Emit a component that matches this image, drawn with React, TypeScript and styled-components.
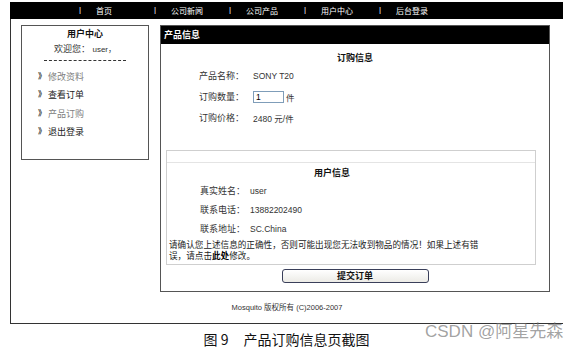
import React from 'react';
import styled, { createGlobalStyle } from 'styled-components';

const Global = createGlobalStyle`
  html, body { margin: 0; padding: 0; background: #fff; }
  body { font-family: "Liberation Sans", "Noto Sans CJK SC", sans-serif; color: #222; }
`;

const Page = styled.div`
  position: relative;
  width: 578px;
  height: 350px;
  overflow: hidden;
  padding-top: 2px;
  box-sizing: border-box;
`;

const Site = styled.div`
  margin-left: 10px;
  width: 553px;
`;

const Nav = styled.nav`
  height: 17px;
  background: #000;
  display: flex;
  align-items: center;
  padding-left: 69px;
  color: #fff;
  font-size: 8px;
`;

const NavItem = styled.div`
  width: 75px;
  display: flex;
  gap: 15px;
  white-space: nowrap;
`;

const Frame = styled.div`
  height: 305px;
  box-sizing: border-box;
  border-left: 1px solid #333;
  border-bottom: 1px solid #333;
  display: flex;
  flex-direction: column;
`;

const Columns = styled.div`
  display: flex;
  align-items: flex-start;
  gap: 11px;
  padding: 6px 0 0 10px;
`;

const Sidebar = styled.aside`
  width: 128px;
  height: 135px;
  box-sizing: border-box;
  border: 1px solid #555;
  padding-top: 2px;
  font-size: 9px;
`;

const SideTitle = styled.div`
  text-align: center;
  font-weight: bold;
  line-height: 12px;
  color: #111;
`;

const Welcome = styled.div`
  text-align: center;
  line-height: 12px;
  margin-top: 3px;
  color: #333;
`;

const Small = styled.span`
  font-size: 8px;
`;

const Dashes = styled.div`
  width: 82px;
  margin: 4px auto 0;
  border-top: 1px dashed #333;
`;

const Menu = styled.ul`
  list-style: none;
  margin: 7px 0 0;
  padding: 0 0 0 16px;
`;

const MenuItem = styled.li<{ $muted?: boolean }>`
  line-height: 18.4px;
  height: 18.4px;
  color: ${p => (p.$muted ? '#808080' : '#222')};
  display: flex;
  align-items: center;
  gap: 2px;
`;

const Bracket = styled.span`
  font-weight: bold;
  font-size: 8px;
  color: #333;
`;

const Panel = styled.section`
  width: 390px;
  height: 267px;
  box-sizing: border-box;
  border: 1px solid #555;
  font-size: 9px;
`;

const PanelHead = styled.div`
  height: 18px;
  background: #000;
  color: #fff;
  font-weight: bold;
  line-height: 18px;
  padding-left: 3px;
`;

const SectionTitle = styled.div<{ $shift?: number }>`
  text-align: center;
  font-weight: bold;
  line-height: 12px;
  color: #111;
  padding-right: ${p => p.$shift || 0}px;
`;

const OrderTitle = styled(SectionTitle)`
  margin-top: 8px;
`;

const Rows = styled.div<{ $left: number; $top: number }>`
  padding-left: ${p => p.$left}px;
  margin-top: ${p => p.$top}px;
`;

const Row = styled.div<{ $h: number; $label: number }>`
  display: grid;
  grid-template-columns: ${p => p.$label}px auto;
  align-items: center;
  height: ${p => p.$h}px;
  color: #333;
`;

const Value = styled.div`
  display: flex;
  align-items: center;
  gap: 2px;
  font-size: 8.5px;
`;

const Qty = styled.div`
  width: 31px;
  height: 12px;
  box-sizing: border-box;
  border: 1px solid #7f9db9;
  font-size: 8.5px;
  line-height: 10px;
  padding-left: 2px;
  color: #000;
`;

const UserBox = styled.div`
  margin: 22px 0 0 5px;
  width: 370px;
  height: 115px;
  box-sizing: border-box;
  border: 1px solid #cfcfcf;
`;

const Strip = styled.div`
  height: 11px;
  border-bottom: 1px solid #e4e4e4;
`;

const UserTitle = styled(SectionTitle)`
  margin-top: 4px;
`;

const Note = styled.p`
  margin: 2px 0 0;
  padding-left: 2px;
  font-size: 8.6px;
  line-height: 11px;
  color: #222;
  b { color: #000; }
`;

const Submit = styled.button`
  display: block;
  margin: 4px auto 0;
  width: 147px;
  height: 14px;
  padding: 0;
  border: 1px solid #3a3f5a;
  border-radius: 3px;
  background: linear-gradient(#ffffff, #ecebe6);
  font-family: inherit;
  font-size: 9px;
  font-weight: bold;
  color: #111;
  line-height: 12px;
`;

const Footer = styled.div`
  margin-top: 9px;
  text-align: center;
  font-size: 7.5px;
  color: #333;
`;

const Caption = styled.div`
  margin-left: 10px;
  width: 553px;
  margin-top: 7px;
  text-align: center;
  font-size: 14px;
  color: #111;
  font-family: "Noto Sans CJK SC", sans-serif;
  line-height: 16px;
`;

const Gap = styled.span`
  display: inline-block;
  width: 15px;
`;

const Watermark = styled.div`
  position: absolute;
  left: 425px;
  top: 322px;
  font-size: 17px;
  line-height: 20px;
  color: rgba(110, 110, 110, 0.65);
  font-family: "Liberation Sans", "Noto Sans CJK SC", sans-serif;
  white-space: nowrap;
`;

const navItems = ['首页', '公司新闻', '公司产品', '用户中心', '后台登录'];

const menu = [
  { text: '修改资料', muted: true },
  { text: '查看订单', muted: false },
  { text: '产品订购', muted: true },
  { text: '退出登录', muted: false },
];

export default function App() {
  return (
    <Page>
      <Global />
      <Site>
        <Nav>
          {navItems.map(t => (
            <NavItem key={t}>
              <span>|</span>
              <span>{t}</span>
            </NavItem>
          ))}
        </Nav>
        <Frame>
          <Columns>
            <Sidebar>
              <SideTitle>用户中心</SideTitle>
              <Welcome>
                欢迎您： <Small>user，</Small>
              </Welcome>
              <Dashes />
              <Menu>
                {menu.map(m => (
                  <MenuItem key={m.text} $muted={m.muted}>
                    <Bracket>》</Bracket>
                    {m.text}
                  </MenuItem>
                ))}
              </Menu>
            </Sidebar>
            <Panel>
              <PanelHead>产品信息</PanelHead>
              <OrderTitle>订购信息</OrderTitle>
              <Rows $left={38} $top={1}>
                <Row $h={21} $label={54}>
                  <span>产品名称：</span>
                  <Value>SONY T20</Value>
                </Row>
                <Row $h={21} $label={54}>
                  <span>订购数量：</span>
                  <Value>
                    <Qty>1</Qty>件
                  </Value>
                </Row>
                <Row $h={21} $label={54}>
                  <span>订购价格：</span>
                  <Value>2480 元/件</Value>
                </Row>
              </Rows>
              <UserBox>
                <Strip />
                <UserTitle $shift={38}>用户信息</UserTitle>
                <Rows $left={33} $top={2}>
                  <Row $h={19} $label={50}>
                    <span>真实姓名：</span>
                    <Value>user</Value>
                  </Row>
                  <Row $h={19} $label={50}>
                    <span>联系电话：</span>
                    <Value>13882202490</Value>
                  </Row>
                  <Row $h={19} $label={50}>
                    <span>联系地址：</span>
                    <Value>SC.China</Value>
                  </Row>
                </Rows>
                <Note>
                  请确认您上述信息的正确性，否则可能出现您无法收到物品的情况！如果上述有错
                  <br />
                  误，请点击<b>此处</b>修改。
                </Note>
              </UserBox>
              <Submit type="button">提交订单</Submit>
            </Panel>
          </Columns>
          <Footer>Mosquito 版权所有 (C)2006-2007</Footer>
        </Frame>
      </Site>
      <Caption>
        图 9<Gap />产品订购信息页截图
      </Caption>
      <Watermark>CSDN @阿星先森</Watermark>
    </Page>
  );
}
